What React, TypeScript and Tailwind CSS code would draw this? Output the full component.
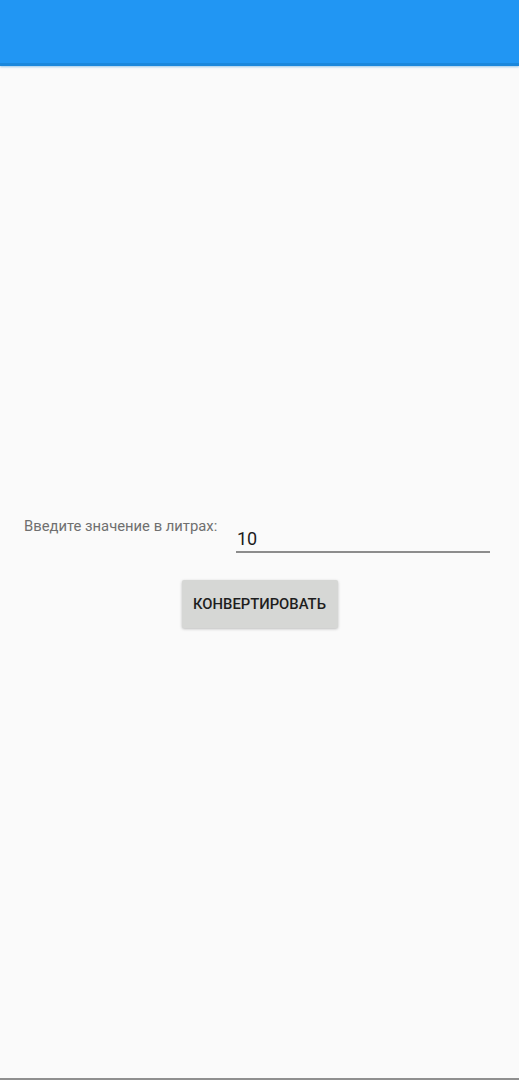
import { useState } from 'react'

export default function App(): JSX.Element {
	const [value, setValue] = useState('10')

	return (
		<div className="flex min-h-[1080px] flex-col bg-[#fafafa] font-['Roboto',sans-serif]">
			<header className="h-[66px] border-b-[3px] border-[#1a87dc] bg-[#2196f3] shadow-[0_1px_2px_rgba(60,150,220,0.5)]" />

			<main className="flex flex-1 flex-col pt-[449px]">
				<div className="flex items-start pl-6 pr-[29px]">
					<label className="mt-[1px] text-[14.8px] leading-[20px] text-[#6f6f6f]">
						Введите значение в литрах:
					</label>
					<div className="ml-auto w-[254px]">
						<input
							value={value}
							onChange={(e) => setValue(e.target.value)}
							className="h-[38px] w-full border-b-2 border-[#8c8c8c] bg-transparent pt-[11px] pl-[1px] text-[18px] leading-[22px] text-[#1c1c1c] outline-none"
						/>
					</div>
				</div>

				<div className="mt-[27px] flex justify-center">
					<button className="h-[48px] w-[156px] rounded-[2px] bg-[#d6d7d5] text-[14.8px] font-medium text-[#1e1e1e] shadow-[0_1px_3px_rgba(0,0,0,0.25)]">
						КОНВЕРТИРОВАТЬ
					</button>
				</div>
			</main>

			<div className="h-[2px] bg-[#8f8f8f]" />
		</div>
	)
}
